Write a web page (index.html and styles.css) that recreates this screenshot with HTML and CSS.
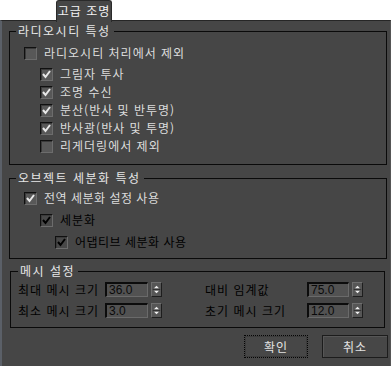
FILE: index.html
```html
<!DOCTYPE html>
<html lang="ko">
<head>
<meta charset="utf-8">
<link rel="stylesheet" href="styles.css">
</head>
<body>
<div class="tabs"><div class="tab">고급 조명</div></div>
<div class="panel">
  <fieldset class="group g1">
    <legend>라디오시티 특성</legend>
    <div class="row r-first"><span class="cb"></span><span class="lbl">라디오시티 처리에서 제외</span></div>
    <div class="sub">
      <div class="row"><span class="cb checked"><svg viewBox="0 0 11 11"><polyline points="2,5 4.5,8 9,2"/></svg></span><span class="lbl">그림자 투사</span></div>
      <div class="row"><span class="cb checked"><svg viewBox="0 0 11 11"><polyline points="2,5 4.5,8 9,2"/></svg></span><span class="lbl">조명 수신</span></div>
      <div class="row"><span class="cb checked"><svg viewBox="0 0 11 11"><polyline points="2,5 4.5,8 9,2"/></svg></span><span class="lbl">분산(반사 및 반투명)</span></div>
      <div class="row"><span class="cb checked"><svg viewBox="0 0 11 11"><polyline points="2,5 4.5,8 9,2"/></svg></span><span class="lbl">반사광(반사 및 투명)</span></div>
      <div class="row"><span class="cb"></span><span class="lbl">리게더링에서 제외</span></div>
    </div>
  </fieldset>
  <fieldset class="group g2">
    <legend>오브젝트 세분화 특성</legend>
    <div class="row2"><span class="cb checked"><svg viewBox="0 0 11 11"><polyline points="2,5 4.5,8 9,2"/></svg></span><span class="lbl tight">전역 세분화 설정 사용</span></div>
    <div class="row2 ind1"><span class="cb checked disabled"><svg viewBox="0 0 11 11"><polyline points="2,5 4.5,8 9,2"/></svg></span><span class="lbl dis">세분화</span></div>
    <div class="row2 ind2"><span class="cb checked disabled"><svg viewBox="0 0 11 11"><polyline points="2,5 4.5,8 9,2"/></svg></span><span class="lbl dis tight">어댑티브 세분화 사용</span></div>
  </fieldset>
  <fieldset class="group g3">
    <legend>메시 설정</legend>
    <div class="mesh">
      <span class="mlbl">최대 메시 크기</span>
      <span class="inp">36.0</span>
      <span class="spin"><svg viewBox="0 0 11 15"><polygon points="5.5,3 8.5,6 2.5,6"/><line x1="1" y1="7.5" x2="10" y2="7.5"/><polygon points="2.5,9 8.5,9 5.5,12"/></svg></span>
      <span class="mlbl col2">대비 임계값</span>
      <span class="inp">75.0</span>
      <span class="spin"><svg viewBox="0 0 11 15"><polygon points="5.5,3 8.5,6 2.5,6"/><line x1="1" y1="7.5" x2="10" y2="7.5"/><polygon points="2.5,9 8.5,9 5.5,12"/></svg></span>
      <span class="mlbl">최소 메시 크기</span>
      <span class="inp">3.0</span>
      <span class="spin"><svg viewBox="0 0 11 15"><polygon points="5.5,3 8.5,6 2.5,6"/><line x1="1" y1="7.5" x2="10" y2="7.5"/><polygon points="2.5,9 8.5,9 5.5,12"/></svg></span>
      <span class="mlbl col2">초기 메시 크기</span>
      <span class="inp">12.0</span>
      <span class="spin"><svg viewBox="0 0 11 15"><polygon points="5.5,3 8.5,6 2.5,6"/><line x1="1" y1="7.5" x2="10" y2="7.5"/><polygon points="2.5,9 8.5,9 5.5,12"/></svg></span>
    </div>
  </fieldset>
  <div class="buttons">
    <button class="btn ok">확인</button>
    <button class="btn">취소</button>
  </div>
</div>
</body>
</html>
```
FILE: styles.css
```css
html, body {
  margin: 0;
  padding: 0;
  background: #ffffff;
}
body {
  font-family: "Noto Sans CJK KR", "Noto Sans", sans-serif;
  font-size: 12px;
  color: #dcdcdc;
  width: 391px;
  height: 366px;
  overflow: hidden;
}
.tabs {
  height: 20px;
  padding-left: 56px;
  display: flex;
  align-items: flex-start;
}
.tab {
  position: relative;
  z-index: 1;
  box-sizing: border-box;
  width: 56px;
  height: 22px;
  background: #464646;
  border: 1px solid #2a2a2a;
  border-bottom: none;
  border-radius: 3px 3px 0 0;
  color: #f4f4f4;
  text-align: center;
  line-height: 19px;
  font-size: 12px;
  letter-spacing: 1px;
}
.panel {
  box-sizing: border-box;
  width: 391px;
  height: 346px;
  background: #464646;
  border-top: 1px solid #262626;
  border-left: 2px solid #5b6068;
  border-right: 1px solid #555;
  display: flex;
  flex-direction: column;
}
.group {
  border: 1px solid #0a0a0a;
  padding: 0 0 0 6px;
  min-width: 0;
}
.group legend {
  padding: 0 3px 0 2px;
  line-height: 14px;
  height: 14px;
  color: #e6e6e6;
  letter-spacing: 1.5px;
}
.g1 {
  margin: 3px 3px 0 7px;
  padding-bottom: 9px;
}
.g2 {
  margin: 6px 3px 0 7px;
  padding-bottom: 5px;
}
.g3 {
  margin: 5px 5px 0 8px;
  padding-bottom: 6px;
  padding-left: 7px;
}
.row {
  height: 18px;
  display: flex;
  align-items: center;
  padding-left: 8px;
}
.r-first {
  margin-top: 6px;
}
.sub {
  margin-top: 3px;
  padding-left: 16px;
}
.row2 {
  height: 22px;
  display: flex;
  align-items: center;
  padding-left: 8px;
}
.row2:first-of-type {
  margin-top: 2px;
}
.ind1 { padding-left: 24px; }
.ind2 { padding-left: 39px; }
.cb {
  box-sizing: border-box;
  width: 13px;
  height: 13px;
  flex: none;
  background: #585858;
  border: 1px solid;
  border-color: #101010 #6c6c6c #6c6c6c #101010;
  box-shadow: inset 1px 1px 0 #3a3a3a;
  display: flex;
}
.cb svg {
  width: 11px;
  height: 11px;
}
.cb polyline {
  fill: none;
  stroke: #e8e8e8;
  stroke-width: 2;
}
.cb.disabled {
  background: #484848;
}
.cb.disabled polyline {
  stroke: #000000;
}
.lbl {
  margin-left: 7px;
  white-space: nowrap;
  line-height: 14px;
  letter-spacing: 1px;
}
.lbl.tight {
  letter-spacing: 0.5px;
}
.lbl.dis {
  color: #000000;
}
.mesh {
  display: grid;
  grid-template-columns: 87px 43px 13px 44px 102px 42px 13px;
  grid-auto-rows: 21px;
  align-items: center;
  margin-top: 1px;
}
.mlbl {
  color: #000000;
  white-space: nowrap;
  line-height: 14px;
  letter-spacing: 1px;
}
.mlbl.col2 {
  grid-column: 5;
}
.inp {
  box-sizing: border-box;
  height: 15px;
  background: #525252;
  border: 1px solid;
  border-width: 2px 1px 1px 2px;
  border-color: #0c0c0c #6a6a6a #6a6a6a #0c0c0c;
  color: #0a0a0a;
  padding-left: 2px;
  line-height: 12px;
  font-family: "Liberation Sans", Arial, sans-serif;
  font-size: 12px;
}
.spin {
  margin-left: 3px;
  box-sizing: border-box;
  width: 11px;
  height: 15px;
  background: #565656;
  border: 1px solid;
  border-color: #6e6e6e #1e1e1e #1e1e1e #6e6e6e;
  display: flex;
}
.spin svg {
  width: 9px;
  height: 13px;
}
.spin polygon {
  fill: #f0f0f0;
}
.spin line {
  stroke: #2a2a2a;
  stroke-width: 1;
}
.buttons {
  display: flex;
  justify-content: flex-end;
  gap: 14px;
  margin: 7px 2px 0 0;
}
.btn {
  box-sizing: border-box;
  height: 23px;
  width: 66px;
  background: #474747;
  border: 1px solid #1c1c1c;
  box-shadow: inset 1px 1px 0 #565656;
  color: #e2e2e2;
  font-family: "Noto Sans CJK KR", sans-serif;
  font-size: 12px;
  padding: 0;
  line-height: 20px;
  letter-spacing: 1px;
}
.btn.ok {
  width: 64px;
  border: 1px dotted #050505;
  box-shadow: inset 0 0 0 1px #3c3c3c;
}
```
